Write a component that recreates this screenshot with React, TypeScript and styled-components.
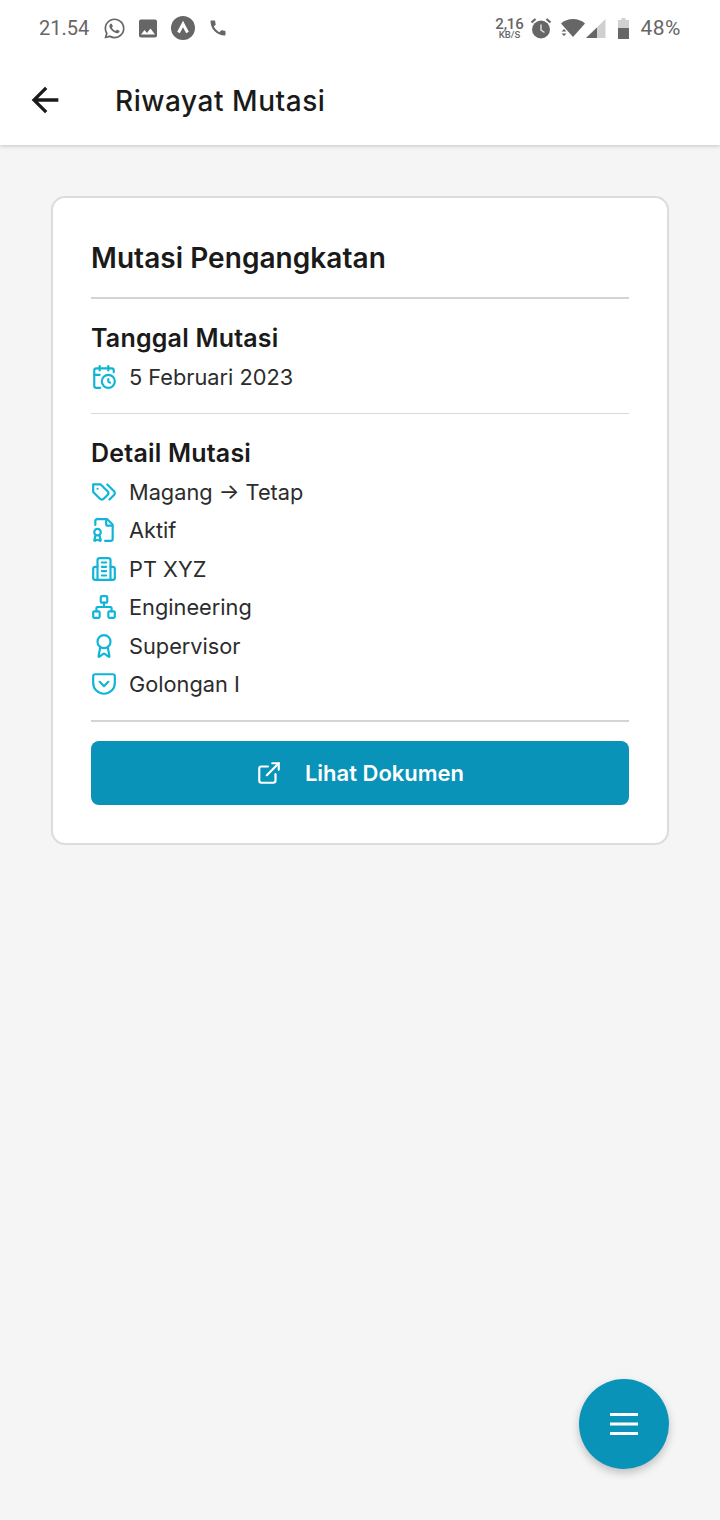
import React from "react";
import styled, { createGlobalStyle } from "styled-components";
import { Award, CalendarClock, ExternalLink, FileBadge, Network, Pocket } from "lucide-react";
import { FaWhatsapp } from "react-icons/fa";
import { MdArrowBack, MdCall, MdImage } from "react-icons/md";

const Global = createGlobalStyle`
  html, body { margin: 0; padding: 0; background: #f5f5f5; }
  * { box-sizing: border-box; }
`;

const Page = styled.div`
  position: relative;
  width: 720px;
  height: 1520px;
  overflow: hidden;
  background: #f5f5f5;
  font-family: Inter, "Liberation Sans", sans-serif;
  color: #1a1a1a;
`;

const Header = styled.header`
  background: #fff;
  height: 145px;
  box-shadow: 0 1px 4px rgba(0, 0, 0, 0.2);
`;

const StatusBar = styled.div`
  height: 56px;
  padding: 0 39px;
  display: flex;
  align-items: center;
  justify-content: space-between;
  color: #666;
  font-family: Roboto, sans-serif;
  font-size: 20px;
`;

const StatusGroup = styled.div`
  display: flex;
  align-items: center;
`;

const Clock = styled.span`
  margin-right: 13px;
`;

const StatusSlot = styled.span<{ $w: number; $gap?: number }>`
  display: flex;
  align-items: center;
  justify-content: center;
  width: ${(p) => p.$w}px;
  margin-right: ${(p) => p.$gap ?? 0}px;
`;

const Speed = styled.span`
  display: flex;
  flex-direction: column;
  align-items: center;
  font-size: 15px;
  font-weight: 500;
  line-height: 12px;
  margin-right: 6px;
  letter-spacing: -0.2px;
`;

const SpeedUnit = styled.span`
  font-size: 9.500px;
  line-height: 9px;
  letter-spacing: 0;
`;

const Percent = styled.span`
  font-size: 21px;
  letter-spacing: 0.5px;
  margin-left: 12px;
`;

const AppBar = styled.div`
  height: 89px;
  display: flex;
  align-items: center;
  padding: 0 25px 1px;
`;

const Title = styled.h1`
  margin: 2px 0 0 50px;
  font-size: 28px;
  font-weight: 500;
  letter-spacing: 0.55px;
  color: #1a1a1a;
`;

const Card = styled.section`
  margin: 51px 51px 0;
  height: 649px;
  padding: 38px 38px;
  background: #fff;
  border: 2px solid #dcdcdc;
  border-radius: 14px;
`;

const CardTitle = styled.h2`
  margin: 0;
  height: 63px;
  font-size: 28px;
  line-height: 44px;
  font-weight: 560;
  letter-spacing: 0.05px;
  border-bottom: 2px solid #d4d4d4;
`;

const Section = styled.div<{ $pad: number; $thick?: boolean }>`
  padding-top: 20px;
  padding-bottom: ${(p) => p.$pad}px;
  border-bottom: ${(p) => (p.$thick ? "2px solid #d4d4d4" : "1px solid #d9d9d9")};
`;

const SectionTitle = styled.h3`
  margin: 0 0 -0.5px;
  font-size: 25px;
  line-height: 39px;
  font-weight: 560;
  letter-spacing: 0.2px;
`;

const Row = styled.div`
  display: flex;
  align-items: center;
  height: 38.4px;
  gap: 13px;
  font-size: 21.75px;
  color: #2c2c2c;
`;

const IconBox = styled.span`
  width: 25px;
  height: 25px;
  display: flex;
  align-items: center;
  justify-content: center;
  color: #0fb5d6;
  flex: none;
  & svg {
    width: 26px;
    height: 26px;
    stroke-width: 2;
    flex: none;
  }
`;

const DocButton = styled.button`
  margin-top: 19px;
  width: 100%;
  height: 64px;
  border: none;
  border-radius: 8px;
  background: #0a93b8;
  color: #fff;
  display: flex;
  align-items: center;
  justify-content: center;
  gap: 23px;
  font-family: inherit;
  font-size: 22px;
  font-weight: 600;
`;

const Fab = styled.button`
  position: absolute;
  left: 579px;
  top: 1379px;
  width: 90px;
  height: 90px;
  border: none;
  border-radius: 50%;
  background: #0a93b8;
  color: #fff;
  display: flex;
  align-items: center;
  justify-content: center;
  box-shadow: 0 4px 8px rgba(0, 0, 0, 0.22);
`;

const TagsIcon = () => (
  <svg viewBox="0 0 24 24" fill="none" stroke="currentColor" strokeLinecap="round" strokeLinejoin="round">
    <path d="M9 5H2v7l6.290 6.290c.94.94 2.480.94 3.420 0l3.580-3.580c.94-.94.94-2.480 0-3.420L9 5Z" />
    <path d="M6 9.010V9" />
    <path d="m15 5 6.300 6.300a2.400 2.400 0 0 1 0 3.400L17 19" />
  </svg>
);

const BuildingIcon = () => (
  <svg viewBox="0 0 24 24" fill="none" stroke="currentColor" strokeLinecap="round" strokeLinejoin="round">
    <path d="M6 22V4a2 2 0 0 1 2-2h8a2 2 0 0 1 2 2v18Z" />
    <path d="M6 10H4a2 2 0 0 0-2 2v8a2 2 0 0 0 2 2h2" />
    <path d="M18 10h2a2 2 0 0 1 2 2v8a2 2 0 0 1-2 2h-2" />
    <path d="M10 6h4M10 10h4M10 14h4M10 18h4" />
  </svg>
);

const MenuLines = () => (
  <svg width="28" height="24" viewBox="0 0 28 24" fill="none" stroke="currentColor" strokeWidth="3" strokeLinecap="butt">
    <path d="M0 2.500h28M0 12h28M0 21.500h28" />
  </svg>
);

const NavIcon = () => (
  <svg width="24" height="24" viewBox="0 0 24 24">
    <circle cx="12" cy="12" r="12" fill="#666" />
    <path d="M7.500 16.500 12 8l4.500 8.500" fill="none" stroke="#fff" strokeWidth="3" />
  </svg>
);

const AlarmIcon = () => (
  <svg width="22" height="22" viewBox="0 0 22 22">
    <circle cx="11" cy="12.500" r="9" fill="#666" />
    <path d="M11 7.500v5.500l3.500 2.500" fill="none" stroke="#ddd" strokeWidth="1.500" />
    <path d="M1.500 5.500 5.500 2M20.500 5.500 16.500 2" stroke="#666" strokeWidth="2.200" />
  </svg>
);

const WifiIcon = () => (
  <svg width="26" height="20" viewBox="0 0 26 20">
    <path d="M1 5.500C4 2.500 8.500 1 13 1s9 1.500 12 4.500L13 19Z" fill="#666" />
    <path d="M1.500 13.500 4 11l2.500 2.500ZM1.500 15.500 4 18l2.500-2.500Z" fill="#666" />
  </svg>
);

const SignalIcon = () => (
  <svg width="20" height="20" viewBox="0 0 20 20">
    <path d="M19.500 1v19H0Z" fill="#d0d0d0" />
    <path d="M11 9.500V20H0Z" fill="#666" />
  </svg>
);

const BatteryIcon = () => (
  <svg width="11" height="21" viewBox="0 0 11 21">
    <path d="M3.500 0h4v2H11v19H0V2h3.500Z" fill="#d0d0d0" />
    <path d="M0 10h11v11H0Z" fill="#666" />
  </svg>
);

const details: [React.ReactNode, string][] = [
  [<TagsIcon key="t" />, "Magang → Tetap"],
  [<FileBadge key="f" />, "Aktif"],
  [<BuildingIcon key="b" />, "PT XYZ"],
  [<Network key="n" />, "Engineering"],
  [<Award key="a" />, "Supervisor"],
  [<Pocket key="p" />, "Golongan I"],
];

export default function App() {
  return (
    <Page>
      <Global />
      <Header>
        <StatusBar>
          <StatusGroup>
            <Clock>21.54</Clock>
            <StatusSlot $w={24} $gap={10}><FaWhatsapp size={23} /></StatusSlot>
            <StatusSlot $w={24} $gap={11}><MdImage size={25} /></StatusSlot>
            <StatusSlot $w={24} $gap={13}><NavIcon /></StatusSlot>
            <StatusSlot $w={20}><MdCall size={24} /></StatusSlot>
          </StatusGroup>
          <StatusGroup>
            <Speed>2,16<SpeedUnit>KB/S</SpeedUnit></Speed>
            <StatusSlot $w={22} $gap={8}><AlarmIcon /></StatusSlot>
            <StatusSlot $w={26}><WifiIcon /></StatusSlot>
            <StatusSlot $w={20} $gap={12}><SignalIcon /></StatusSlot>
            <StatusSlot $w={11}><BatteryIcon /></StatusSlot>
            <Percent>48%</Percent>
          </StatusGroup>
        </StatusBar>
        <AppBar>
          <MdArrowBack size={40} color="#1a1a1a" />
          <Title>Riwayat Mutasi</Title>
        </AppBar>
      </Header>
      <Card>
        <CardTitle>Mutasi Pengangkatan</CardTitle>
        <Section $pad={17.5}>
          <SectionTitle>Tanggal Mutasi</SectionTitle>
          <Row>
            <IconBox><CalendarClock /></IconBox>
            5 Februari 2023
          </Row>
        </Section>
        <Section $pad={16.5} $thick>
          <SectionTitle>Detail Mutasi</SectionTitle>
          {details.map(([icon, label]) => (
            <Row key={label}>
              <IconBox>{icon}</IconBox>
              {label}
            </Row>
          ))}
        </Section>
        <DocButton>
          <ExternalLink size={26} strokeWidth={2} />
          Lihat Dokumen
        </DocButton>
      </Card>
      <Fab>
        <MenuLines />
      </Fab>
    </Page>
  );
}
